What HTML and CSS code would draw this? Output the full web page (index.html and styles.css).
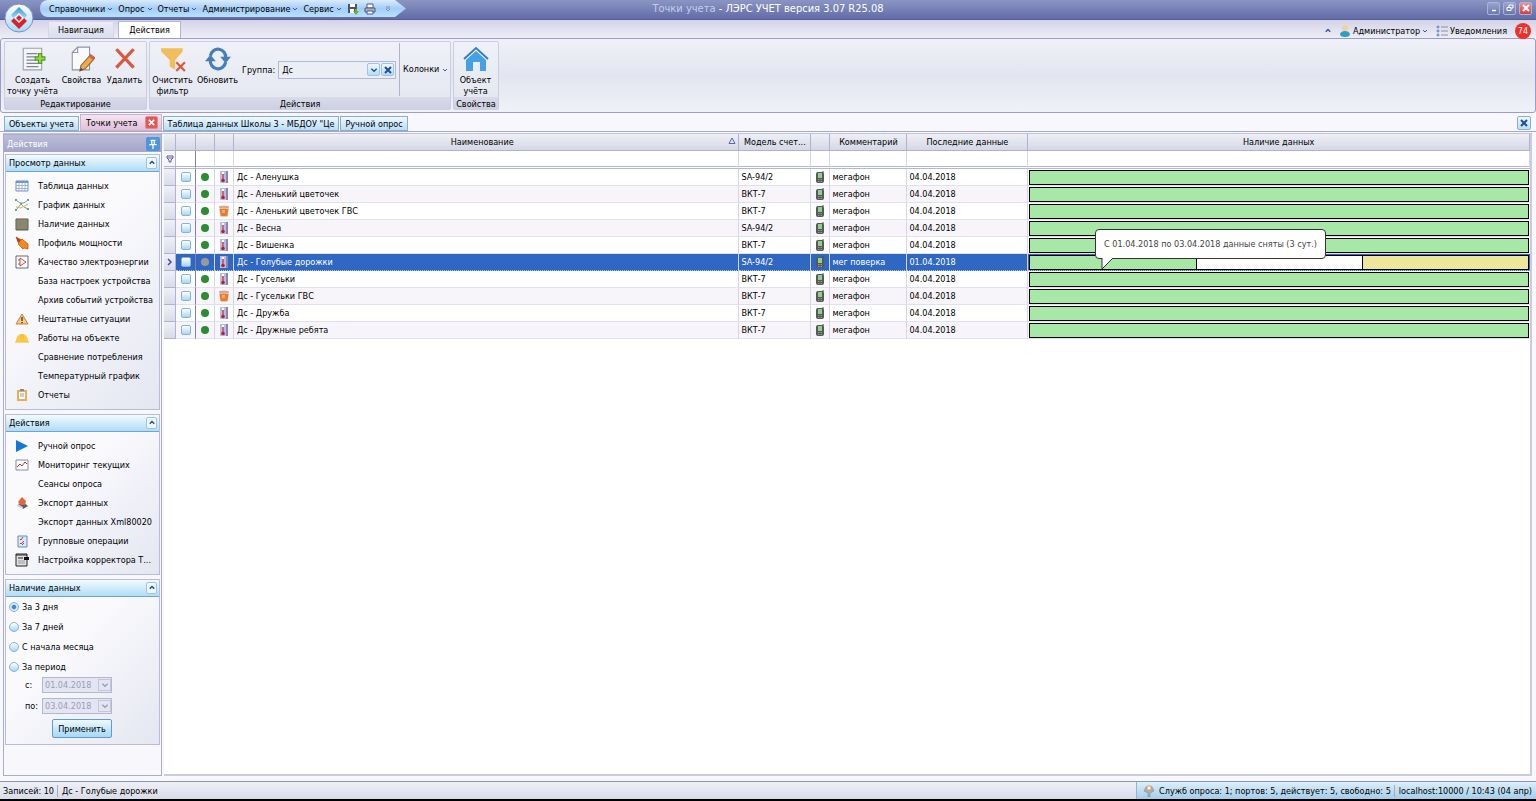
FILE: index.html
```html
<!DOCTYPE html>
<html lang="ru">
<head>
    <meta charset="UTF-8">
    <meta name="viewport" content="width=device-width, initial-scale=1.0">
    <title>Точки учета - ЛЭРС УЧЕТ версия 3.07 R25.08</title>
    <link rel="stylesheet" href="styles.css">
</head>
<body>
    <!-- Shared icons -->
    <svg class="sprite" aria-hidden="true">
        <symbol id="down" viewBox="0 0 6 6"><path d="M1 2l2 2 2-2" fill="none" stroke="currentColor"/></symbol>
        <symbol id="up" viewBox="0 0 8 8"><path d="M1 5l3-3 3 3" fill="none" stroke="currentColor" stroke-width="2"/></symbol>
        <symbol id="cross" viewBox="0 0 8 8"><path d="M1 1l6 6M7 1L1 7" fill="none" stroke="currentColor" stroke-width="2"/></symbol>
        <symbol id="thermo" viewBox="0 0 12 12">
            <rect x="2" width="8" height="12" fill="#b9bce2"/><path d="M8 0h2v12H8z" fill="#8388b8"/>
            <path d="M5 1v8" stroke="#fff" stroke-width="2"/><path d="M5 3v6" stroke="#b5222e" stroke-width="1.4"/><circle cx="5" cy="9.5" r="1.8" fill="#b5222e"/>
        </symbol>
        <symbol id="cup" viewBox="0 0 12 12">
            <path d="M1 1l1.500 11h7L11 1z" fill="#dcd2cc"/><path d="M1.500 4l1.200 7h6.600l1.200-7z" fill="#f07a28"/><path d="M4 5h3v3H4z" fill="#ffb070"/><ellipse cx="6" cy="2" rx="5" ry="1.500" fill="#d8a890"/>
        </symbol>
        <symbol id="phone" viewBox="0 0 12 12">
            <rect x="2" y="1" width="8" height="11" rx="2" fill="#555a55"/><path d="M9 0v2" stroke="#4a4d4a"/><rect x="4" y="2" width="4" height="5" fill="#8ed08a"/><path d="M4 8.500h4M4 10.500h4" stroke="#999" stroke-dasharray="1 .5"/>
        </symbol>
    </svg>

    <header>
        <div class="titlebar">
            <nav class="quick">
                <button>Справочники <svg class="arr"><use href="#down"/></svg></button>
                <button>Опрос <svg class="arr"><use href="#down"/></svg></button>
                <button>Отчеты <svg class="arr"><use href="#down"/></svg></button>
                <button>Администрирование <svg class="arr"><use href="#down"/></svg></button>
                <button>Сервис <svg class="arr"><use href="#down"/></svg></button>
                <button aria-label="Сохранить"><svg class="ico" viewBox="0 0 12 12"><path d="M1 1h9v9H1z" fill="#4a5568"/><path d="M3 1h5v3H3zM3 6h4v4H3z" fill="#fff"/><path d="M8 6h2v2h2L9 12 6 8h2z" fill="#5fb336"/></svg></button>
                <button aria-label="Печать"><svg class="ico" viewBox="0 0 12 12"><path d="M3 1h6v4H3z" fill="#fff" stroke="#4a5a80"/><path d="M1 5h10v4H1z" fill="#a8b4cc" stroke="#4a5a80"/><path d="M3 8h6v3H3z" fill="#fff" stroke="#4a5a80"/></svg></button>
                <button class="more" aria-label="Настройка панели"><svg class="arr" viewBox="0 0 6 6"><path d="M1 1h4M1 3h4L3 5z" fill="#fff" stroke="#5577aa" stroke-width=".7"/></svg></button>
            </nav>
            <h1><span>Точки учета</span> - ЛЭРС УЧЕТ версия 3.07 R25.08</h1>
            <div class="window-buttons">
                <button aria-label="Свернуть"><svg viewBox="0 0 8 8"><path d="M2 6.500h4" stroke="#fff" stroke-width="1.500"/></svg></button>
                <button aria-label="Развернуть"><svg viewBox="0 0 8 8" fill="none" stroke="#fff"><path d="M3 3V1h4v3H5M1 3.500h4v3H1z"/></svg></button>
                <button class="close" aria-label="Закрыть"><svg><use href="#cross"/></svg></button>
            </div>
        </div>
        <button class="app-logo" aria-label="Меню программы">
            <svg viewBox="0 0 30 30">
                <defs>
                    <linearGradient id="orb" x2="0" y2="1"><stop stop-color="#fff"/><stop offset=".5" stop-color="#d4ecfa"/><stop offset="1" stop-color="#a4daf8"/></linearGradient>
                    <linearGradient id="roof" x2="0" y2="1"><stop stop-color="#2b9be0"/><stop offset="1" stop-color="#b4d8ec"/></linearGradient>
                </defs>
                <circle cx="15" cy="15" r="14" fill="url(#orb)" stroke="#7d8fc0"/>
                <path d="M15 4l8 8-3 4-5-5-5 5-3-4z" fill="url(#roof)"/>
                <path d="M7 18l3-3 5 4 5-4 3 3-8 8z" fill="#dc2028"/><path d="M15 10l5 5-5 5-5-5z" fill="#fff"/><path d="M15 12l3 3-3 3-3-3z" fill="#dc2530"/>
            </svg>
        </button>
        <div class="ribbon-tabs">
            <button>Навигация</button>
            <button class="active">Действия</button>
            <div class="user-area">
                <button class="blue" aria-label="Свернуть ленту"><svg class="arr"><use href="#up"/></svg></button>
                <button><svg class="ico" viewBox="0 0 12 12"><circle cx="6" cy="3" r="3" fill="#f5cf9c"/><path d="M1 9q1-3 5-3t5 3q0 3-5 3T1 9z" fill="#2aa0c8"/></svg> Администратор <svg class="arr"><use href="#down"/></svg></button>
                <button><svg class="ico" viewBox="0 0 12 12" fill="none" stroke="#4a80c0"><circle cx="2" cy="2" r="1"/><circle cx="2" cy="6" r="1"/><circle cx="2" cy="10" r="1"/><path d="M5 2h7M5 6h7M5 10h7" stroke="#8a90a0"/></svg> Уведомления</button>
                <span class="badge">74</span>
            </div>
        </div>
        <div class="ribbon">
            <section class="ribbon-group edit-group">
                <div class="tools">
                    <button><svg viewBox="0 0 24 24"><path d="M3 2h17v20H3z" fill="#f4f5f7" stroke="#9aa1ae"/><path d="M6 7h10M6 10h9M6 13h9M6 16h11M6 19h11" stroke="#7d8695" stroke-width="1.300"/><path d="M17 7h3v3h3v3h-3v3h-3v-3h-3v-3h3z" fill="#9bd63c" stroke="#4f9a2a"/></svg>Создать<br>точку учёта</button>
                    <button><svg viewBox="0 0 24 24"><path d="M8 1h11v21H3V6z" fill="#fafafc" stroke="#8e94a4"/><path d="M8 1v5H3" fill="none" stroke="#8e94a4"/><path d="M20 8l4 3-9 10-5 2 1-5z" fill="#f0a848" stroke="#8c6a3c"/><path d="M20 8l4 3-2 2-4-3z" fill="#de5f4c"/><path d="M10 23l1-3 2 2z" fill="#444"/></svg>Свойства</button>
                    <button><svg viewBox="0 0 24 24"><path d="M4 3l16 17M20 3L4 20" stroke="#d9593c" stroke-width="3"/></svg>Удалить</button>
                </div>
                <h2>Редактирование</h2>
            </section>
            <section class="ribbon-group action-group">
                <div class="tools">
                    <button><svg viewBox="0 0 24 24"><path d="M1 2h20v3l-7 8v9l-5-3v-6L1 5z" fill="#f0be5c"/><path d="M15 15l8 8M23 15l-8 8" stroke="#d9593c" stroke-width="2"/></svg>Очистить<br>фильтр</button>
                    <button><svg viewBox="0 0 24 24" fill="none" stroke="#457fba" stroke-width="3"><path d="M5 9a7 7 0 0 1 14 2M19 15a7 7 0 0 1-14-2"/><path d="M14 10h10l-5 6zM0 14l5-6 5 6z" fill="#457fba" stroke="none"/></svg>Обновить</button>
                    <label for="group">Группа:</label>
                    <div class="combo">
                        <input id="group" type="text" value="Дс">
                        <button aria-label="Выбрать"><svg><use href="#down"/></svg></button>
                        <button aria-label="Сбросить"><svg><use href="#cross"/></svg></button>
                    </div>
                    <button class="columns">Колонки <svg class="arr"><use href="#down"/></svg></button>
                </div>
                <h2>Действия</h2>
            </section>
            <section class="ribbon-group object-group">
                <div class="tools">
                    <button><svg viewBox="0 0 26 26"><path d="M1 13L13 2l12 11" fill="none" stroke="#2f7fc4" stroke-width="2"/><path d="M3 14L13 5l10 9v11h-6v-9h-7v9H3z" fill="#46a0e6"/></svg>Объект<br>учёта</button>
                </div>
                <h2>Свойства</h2>
            </section>
        </div>
    </header>

    <nav class="doc-tabs">
        <button>Объекты учета</button>
        <button class="active">Точки учета <span class="tab-close"><svg><use href="#cross"/></svg></span></button>
        <button>Таблица данных Школы 3 - МБДОУ "Це</button>
        <button>Ручной опрос</button>
        <button class="small-button close-doc" aria-label="Закрыть вкладку"><svg><use href="#cross"/></svg></button>
    </nav>

    <main>
        <aside>
            <h2 class="panel-title">Действия <button class="pin" aria-label="Закрепить"><svg viewBox="0 0 8 8"><path d="M2 1h4M3 1v3M5 1v3M1 4.500h6M4 5v3" stroke="#fff"/></svg></button></h2>
            <section class="panel-group">
                <h3>Просмотр данных <button class="small-button" aria-label="Свернуть"><svg><use href="#up"/></svg></button></h3>
                <ul>
                    <li><a href="#"><svg viewBox="0 0 14 14"><path d="M1 2h12v10H1z" fill="#fff" stroke="#6c8fc4"/><path d="M1 3h12" stroke="#6c8fc4" stroke-width="2"/><path d="M1 6.500h12M1 9.500h12M4 2v10M7 2v10M10 2v10" stroke="#8aa8d4" stroke-width=".8"/></svg>Таблица данных</a></li>
                    <li><a href="#"><svg viewBox="0 0 14 14" fill="none"><path d="M1 2l4 3 4 0 4-3" stroke="#6a9ac8"/><path d="M1 12l5-6 3 3 4 2" stroke="#6fa860"/><path d="M1 9l5 1 7-4" stroke="#d8b060"/><path d="M0 1h2v2H0zM12 1h2v2h-2zM0 11h2v2H0zM12 10h2v2h-2zM5 5h2v2H5z" fill="#7a9a90"/></svg>График данных</a></li>
                    <li><a href="#"><svg viewBox="0 0 14 14"><path d="M1 2h12v11H1z" fill="#7cae74" stroke="#555"/><path d="M2 4h10M2 10h10" stroke="#c86068" stroke-width="1.500"/><path d="M2 6h10M2 8h10M2 12h10" stroke="#555" stroke-width=".6"/></svg>Наличие данных</a></li>
                    <li><a href="#"><svg viewBox="0 0 14 14"><path d="M1 1l5 3 1-1 6 5v5l-4-1-1 1-5-5 1-1z" fill="#f28a1e" stroke="#c05a20" stroke-width=".8"/><path d="M1 1l5 3-3 3z" fill="#b83820"/></svg>Профиль мощности</a></li>
                    <li><a href="#"><svg viewBox="0 0 14 14" fill="none"><path d="M1 1h12v12H1z" fill="#fff" stroke="#667"/><path d="M5 3v8l6-4zM3 5h2M3 9h2" stroke="#c04848"/></svg>Качество электроэнергии</a></li>
                    <li><a href="#"><svg></svg>База настроек устройства</a></li>
                    <li><a href="#"><svg></svg>Архив событий устройства</a></li>
                    <li><a href="#"><svg viewBox="0 0 14 14"><path d="M7 2l6 10H1z" fill="#f8c880" stroke="#c08440"/><path d="M7 5v4M7 10v1.200" stroke="#333" stroke-width="1.300"/></svg>Нештатные ситуации</a></li>
                    <li><a href="#"><svg viewBox="0 0 14 14"><path d="M1 11q0-8 6-8t6 8z" fill="#fbcb48"/><path d="M0 11h14M6 3v5M8 3v5" stroke="#f2b632"/></svg>Работы на объекте</a></li>
                    <li><a href="#"><svg></svg>Сравнение потребления</a></li>
                    <li><a href="#"><svg></svg>Температурный график</a></li>
                    <li><a href="#"><svg viewBox="0 0 14 14"><path d="M2 2h10v11H2z" fill="#e8b050"/><path d="M4 4h6v7H4z" fill="#fff"/><path d="M5 1h4v2H5z" fill="#889"/><path d="M5 6h4M5 8h4" stroke="#99a"/></svg>Отчеты</a></li>
                </ul>
            </section>
            <section class="panel-group">
                <h3>Действия <button class="small-button" aria-label="Свернуть"><svg><use href="#up"/></svg></button></h3>
                <ul>
                    <li><a href="#"><svg viewBox="0 0 14 14"><path d="M1 1l12 6-12 6z" fill="#1478d4"/></svg>Ручной опрос</a></li>
                    <li><a href="#"><svg viewBox="0 0 14 14" fill="none"><path d="M1 2h12v10H1z" fill="#fff" stroke="#889"/><path d="M2 9l3-3 2 2 3-4 2 2" stroke="#c83038"/></svg>Мониторинг текущих</a></li>
                    <li><a href="#"><svg></svg>Сеансы опроса</a></li>
                    <li><a href="#"><svg viewBox="0 0 14 14"><path d="M3 8l5-2 5 4-5 3z" fill="#555c66"/><path d="M3 8l5 3v2L2 10z" fill="#ccd"/><path d="M7 1l4 4-1 4H6L3 6z" fill="#e8643c"/></svg>Экспорт данных</a></li>
                    <li><a href="#"><svg></svg>Экспорт данных Xml80020</a></li>
                    <li><a href="#"><svg viewBox="0 0 14 14" fill="none"><path d="M3 2h9v11H3z" fill="#d8e8f8" stroke="#6090c0"/><path d="M5 5l1 1 2-3M5 9l1 1 3-3M7 11l2-2" stroke="#c04040"/></svg>Групповые операции</a></li>
                    <li><a href="#"><svg viewBox="0 0 14 14"><path d="M1 1h11v12H1z" fill="#e0e4e0" stroke="#222"/><path d="M1 2h11M3 5h5" stroke="#222"/><path d="M9 4h5v3H9z" fill="#111"/><path d="M3 8h7M3 10h7" stroke="#99a"/></svg>Настройка корректора Т...</a></li>
                </ul>
            </section>
            <section class="panel-group">
                <h3>Наличие данных <button class="small-button" aria-label="Свернуть"><svg><use href="#up"/></svg></button></h3>
                <form class="period">
                    <label><input type="radio" name="period" checked> За 3 дня</label>
                    <label><input type="radio" name="period"> За 7 дней</label>
                    <label><input type="radio" name="period"> С начала месяца</label>
                    <label><input type="radio" name="period"> За период</label>
                    <div class="date-row">
                        <label for="from">с:</label>
                        <div class="date"><input id="from" type="text" value="01.04.2018" disabled><button disabled aria-label="Календарь"><svg><use href="#down"/></svg></button></div>
                    </div>
                    <div class="date-row">
                        <label for="to">по:</label>
                        <div class="date"><input id="to" type="text" value="03.04.2018" disabled><button disabled aria-label="Календарь"><svg><use href="#down"/></svg></button></div>
                    </div>
                    <button type="button" class="apply">Применить</button>
                </form>
            </section>
        </aside>

        <div class="grid">
            <table>
                <colgroup>
                    <col class="c-mark"><col class="c-check"><col class="c-icon"><col class="c-icon"><col class="c-name">
                    <col class="c-model"><col class="c-icon"><col class="c-comment"><col class="c-date"><col>
                </colgroup>
                <thead>
                    <tr>
                        <th></th><th></th><th></th><th></th>
                        <th class="sorted">Наименование <svg viewBox="0 0 8 8"><path d="M1 6.500L4 1l3 5.500z" fill="none" stroke="#5a68a8"/></svg></th>
                        <th>Модель счет...</th><th></th><th>Комментарий</th><th>Последние данные</th><th>Наличие данных</th>
                    </tr>
                    <tr class="filter">
                        <td><svg viewBox="0 0 8 8"><path d="M1 1h6v2L5 5v2H3V5L1 3zM1 3h6" fill="none" stroke="#5a60a8"/></svg></td>
                        <td></td><td></td><td></td><td></td><td></td><td></td><td></td><td></td><td></td>
                    </tr>
                </thead>
                <tbody>
                    <tr>
                        <td></td><td><input type="checkbox" aria-label="Выбрать"></td><td><i class="dot"></i></td><td><svg><use href="#thermo"/></svg></td>
                        <td>Дс - Аленушка</td><td>SA-94/2</td><td><svg><use href="#phone"/></svg></td><td>мегафон</td><td>04.04.2018</td><td><div class="bar"><i></i></div></td>
                    </tr>
                    <tr>
                        <td></td><td><input type="checkbox" aria-label="Выбрать"></td><td><i class="dot"></i></td><td><svg><use href="#thermo"/></svg></td>
                        <td>Дс - Аленький цветочек</td><td>ВКТ-7</td><td><svg><use href="#phone"/></svg></td><td>мегафон</td><td>04.04.2018</td><td><div class="bar"><i></i></div></td>
                    </tr>
                    <tr>
                        <td></td><td><input type="checkbox" aria-label="Выбрать"></td><td><i class="dot"></i></td><td><svg><use href="#cup"/></svg></td>
                        <td>Дс - Аленький цветочек ГВС</td><td>ВКТ-7</td><td><svg><use href="#phone"/></svg></td><td>мегафон</td><td>04.04.2018</td><td><div class="bar"><i></i></div></td>
                    </tr>
                    <tr>
                        <td></td><td><input type="checkbox" aria-label="Выбрать"></td><td><i class="dot"></i></td><td><svg><use href="#thermo"/></svg></td>
                        <td>Дс - Весна</td><td>SA-94/2</td><td><svg><use href="#phone"/></svg></td><td>мегафон</td><td>04.04.2018</td><td><div class="bar"><i></i></div></td>
                    </tr>
                    <tr>
                        <td></td><td><input type="checkbox" aria-label="Выбрать"></td><td><i class="dot"></i></td><td><svg><use href="#thermo"/></svg></td>
                        <td>Дс - Вишенка</td><td>ВКТ-7</td><td><svg><use href="#phone"/></svg></td><td>мегафон</td><td>04.04.2018</td><td><div class="bar"><i></i></div></td>
                    </tr>
                    <tr class="selected">
                        <td><svg viewBox="0 0 8 8"><path d="M2 1l3 3-3 3" fill="none" stroke="#4a4ab0" stroke-width="1.500"/></svg></td><td><input type="checkbox" aria-label="Выбрать"></td><td><i class="dot off"></i></td><td><svg><use href="#thermo"/></svg></td>
                        <td>Дс - Голубые дорожки</td><td>SA-94/2</td><td><svg><use href="#phone"/></svg></td><td>мег поверка</td><td>01.04.2018</td>
                        <td><div class="bar"><i></i><i class="empty"></i><i class="partial"></i>
                            <div class="tip">С 01.04.2018 по 03.04.2018 данные сняты (3 сут.)<svg viewBox="0 0 14 12"><path d="M1 0v11L12 0" fill="#fff" stroke="#333"/></svg></div></div></td>
                    </tr>
                    <tr>
                        <td></td><td><input type="checkbox" aria-label="Выбрать"></td><td><i class="dot"></i></td><td><svg><use href="#thermo"/></svg></td>
                        <td>Дс - Гусельки</td><td>ВКТ-7</td><td><svg><use href="#phone"/></svg></td><td>мегафон</td><td>04.04.2018</td><td><div class="bar"><i></i></div></td>
                    </tr>
                    <tr>
                        <td></td><td><input type="checkbox" aria-label="Выбрать"></td><td><i class="dot"></i></td><td><svg><use href="#cup"/></svg></td>
                        <td>Дс - Гусельки ГВС</td><td>ВКТ-7</td><td><svg><use href="#phone"/></svg></td><td>мегафон</td><td>04.04.2018</td><td><div class="bar"><i></i></div></td>
                    </tr>
                    <tr>
                        <td></td><td><input type="checkbox" aria-label="Выбрать"></td><td><i class="dot"></i></td><td><svg><use href="#thermo"/></svg></td>
                        <td>Дс - Дружба</td><td>ВКТ-7</td><td><svg><use href="#phone"/></svg></td><td>мегафон</td><td>04.04.2018</td><td><div class="bar"><i></i></div></td>
                    </tr>
                    <tr>
                        <td></td><td><input type="checkbox" aria-label="Выбрать"></td><td><i class="dot"></i></td><td><svg><use href="#thermo"/></svg></td>
                        <td>Дс - Дружные ребята</td><td>ВКТ-7</td><td><svg><use href="#phone"/></svg></td><td>мегафон</td><td>04.04.2018</td><td><div class="bar"><i></i></div></td>
                    </tr>
                </tbody>
            </table>
        </div>
    </main>

    <footer>
        <span class="count">Записей: 10</span>
        <span>Дс - Голубые дорожки</span>
        <div class="server">
            <svg viewBox="0 0 12 12"><path d="M3 2h6l2 4-4 2v4H5V8L1 6z" fill="#a8adb8" stroke="#858b98" stroke-width=".6"/><path d="M4 1h4v4H4z" fill="#fff" stroke="#e09a50"/></svg>
            <span class="polls">Служб опроса: 1; портов: 5, действует: 5, свободно: 5</span>
            <span>localhost:10000 / 10:43 (04 апр)</span>
        </div>
    </footer>
</body>
</html>
```
FILE: styles.css
```css
* {
    box-sizing: border-box;
}
body {
    margin: 0;
    height: 100vh;
    display: flex;
    flex-direction: column;
    overflow: hidden;
    background: #f8f8fc;
    border-bottom: 2px solid #000;
    font-family: "DejaVu Sans Condensed", "DejaVu Sans", sans-serif;
    font-size: 9px;
    line-height: 12px;
    color: #000;
}
button, input {
    font: inherit;
    color: inherit;
    margin: 0;
    padding: 0;
    border: 0;
    background: none;
}
button {
    white-space: nowrap;
}
h1, h2, h3, ul {
    margin: 0;
    padding: 0;
    font-size: 9px;
    font-weight: normal;
}
svg {
    flex: none;
}
.sprite {
    position: absolute;
    width: 0;
    height: 0;
}
.arr {
    width: 6px;
    height: 6px;
    color: #3c5a90;
}
.ico {
    width: 12px;
    height: 12px;
}

/* title bar */
header {
    position: relative;
}
.titlebar {
    height: 20px;
    display: grid;
    grid-template-columns: 1fr auto 1fr;
    align-items: center;
    background: linear-gradient(#8b95c4, #626ca6);
    border-bottom: 1px solid #555e9c;
}
.quick {
    display: flex;
    align-items: center;
    align-self: start;
    gap: 5px;
    width: 366px;
    height: 17px;
    margin-left: 40px;
    padding-left: 9px;
    background: linear-gradient(#d8ebfc, #a5cdf5 50%, #b8e0ff);
    border-radius: 8px 0 0 8px;
    clip-path: polygon(0 0, 97% 0, 100% 50%, 97% 100%, 0 100%);
}
.quick button, .user-area button {
    display: flex;
    align-items: center;
    gap: 2px;
}
.quick .more {
    margin-left: auto;
    padding-right: 15px;
}
h1 {
    font-size: 11px;
    line-height: 16px;
    padding-bottom: 2px;
    color: #fff;
}
h1 span {
    color: #c5cdee;
}
.window-buttons {
    display: flex;
    justify-content: flex-end;
    gap: 3px;
    padding: 0 4px 3px 0;
}
.window-buttons button {
    display: flex;
    align-items: center;
    justify-content: center;
    width: 13px;
    height: 13px;
    border: 1px solid #a9b3d8;
    border-radius: 2px;
    background: linear-gradient(#9aa4d0, #6c77b0);
    color: #fff;
}
.window-buttons svg {
    width: 8px;
    height: 8px;
}
.window-buttons .close {
    background: linear-gradient(#f09090, #dc3838);
}
.app-logo {
    position: absolute;
    left: 4px;
    top: 3px;
    width: 30px;
    height: 30px;
}
.app-logo svg {
    display: block;
}

/* ribbon */
.ribbon-tabs {
    display: flex;
    align-items: flex-end;
    gap: 4px;
    height: 18px;
    padding-left: 48px;
    background: linear-gradient(#d2d3e6, #eeeef7);
}
.ribbon-tabs > button {
    width: 66px;
    height: 17px;
    border: 1px solid #d5d6e8;
    border-bottom: 0;
    background: linear-gradient(#eaebf5, #dcdeec);
}
.ribbon-tabs > .active {
    width: 63px;
    border-color: #b4b6d6;
    background: #fff;
}
.user-area {
    display: flex;
    align-items: center;
    align-self: stretch;
    gap: 8px;
    margin-left: auto;
    padding: 3px 5px 0 0;
}
.blue {
    color: #2a5298;
}
.badge {
    width: 16px;
    height: 16px;
    border-radius: 50%;
    background: #f03028;
    color: #fff;
    line-height: 16px;
    text-align: center;
}
.ribbon {
    display: flex;
    gap: 2px;
    height: 75px;
    padding: 2px 3px;
    border: 1px solid #9b9cc8;
    border-radius: 3px;
    background: linear-gradient(#f0f1f8, #e2e5f0 50%, #f0f1f8);
}
.ribbon-group {
    display: flex;
    flex-direction: column;
    border: 1px solid #cccde2;
    border-radius: 2px;
    background: linear-gradient(#f0f1f7, #e3e6f1);
}
.ribbon-group h2 {
    height: 13px;
    line-height: 14px;
    text-align: center;
    background: linear-gradient(#d9dbea, #cdcfe2);
}
.edit-group {
    width: 143px;
}
.action-group {
    width: 302px;
}
.object-group {
    width: 46px;
}
.tools {
    flex: 1;
    display: flex;
    align-items: center;
}
.tools > button {
    flex: none;
    align-self: flex-start;
    width: 43px;
    padding-top: 4px;
    line-height: 11px;
    text-align: center;
}
.tools > button > svg {
    display: block;
    width: 26px;
    height: 26px;
    margin: 0 auto 3px;
}
.edit-group .tools > button:first-child {
    width: 55px;
}
.action-group .tools > button {
    width: 45px;
}
.action-group .tools label {
    margin-left: 2px;
}
.combo {
    flex: 1;
    min-width: 0;
    display: flex;
    align-items: center;
    gap: 1px;
    height: 18px;
    margin: 0 3px;
    padding-right: 1px;
    border: 1px solid #b4b8d6;
    background: #eceef6;
}
.combo input {
    flex: 1;
    min-width: 0;
    padding-left: 3px;
}
.combo button, .small-button {
    display: flex;
    align-items: center;
    justify-content: center;
    width: 13px;
    height: 13px;
    border: 1px solid #9cc4e4;
    border-radius: 2px;
    background: linear-gradient(#f0f8ff, #b4dcf8);
    color: #1f4f90;
}
.combo svg, .small-button svg {
    width: 8px;
    height: 8px;
}
.action-group .tools > .columns {
    display: flex;
    align-items: center;
    align-self: stretch;
    gap: 3px;
    width: 51px;
    margin: 1px 0;
    padding: 0 0 0 3px;
    border-left: 1px solid #b0b2cc;
}
.tools > .columns > svg {
    width: 6px;
    height: 6px;
    margin: 0;
}

/* document tabs */
.doc-tabs {
    display: flex;
    align-items: flex-end;
    gap: 1px;
    height: 19px;
    padding: 0 5px 0 4px;
    border-bottom: 1px solid #a5a7cc;
}
.doc-tabs button {
    height: 15px;
    padding: 0 4px;
    border: 1px solid #8faccf;
    background: linear-gradient(#eef8ff, #b9def6);
}
.doc-tabs .active {
    display: flex;
    align-items: center;
    gap: 7px;
    height: 17px;
    padding: 0 3px 0 5px;
    border-color: #d0b0cc;
    background: linear-gradient(#f4e4f0, #dfc0da);
}
.tab-close {
    display: flex;
    padding: 2px;
    border: 1px solid #e88;
    border-radius: 2px;
    background: #e05a54;
    color: #fff;
}
.tab-close svg {
    width: 7px;
    height: 7px;
}
.doc-tabs .close-doc {
    width: 14px;
    height: 14px;
    margin: 0 0 1px auto;
    padding: 0;
}

/* workspace */
main {
    flex: 1;
    min-height: 0;
    display: flex;
    gap: 2px;
    margin: 1px 4px 5px 3px;
    border-top: 1px solid #c2c4de;
}
aside {
    width: 159px;
    border: 1px solid #a9abcf;
    padding: 0 1px;
}
.panel-title {
    display: flex;
    justify-content: space-between;
    align-items: center;
    height: 17px;
    margin: 0 -1px 2px;
    padding: 0 1px 0 3px;
    background: linear-gradient(#bcbdd9, #a3a5c9);
    color: #fff;
}
.pin {
    width: 14px;
    height: 14px;
    border-radius: 2px;
    background: #4e96dc;
}
.pin svg {
    display: block;
    width: 10px;
    height: 10px;
    margin: auto;
}
.panel-group {
    margin-bottom: 4px;
    border: 1px solid #b9bbda;
    background: linear-gradient(135deg, #fafafd 40%, #e4e6f1);
}
.panel-group h3 {
    display: flex;
    justify-content: space-between;
    align-items: center;
    height: 17px;
    padding: 0 2px 0 3px;
    background: linear-gradient(#f2fbff, #b0dcf6);
    border-bottom: 1px solid #6fa6d0;
}
.panel-group h3 .small-button {
    width: 11px;
    height: 12px;
    background: #f0f8ff;
}
.panel-group h3 .small-button svg {
    width: 6px;
    height: 6px;
}
.panel-group ul {
    list-style: none;
    padding: 4px 0 5px;
}
.panel-group a {
    display: flex;
    align-items: center;
    gap: 9px;
    height: 19px;
    padding-left: 9px;
    color: inherit;
    text-decoration: none;
    white-space: nowrap;
}
.panel-group a svg {
    width: 14px;
    height: 14px;
}
.period {
    padding-bottom: 6px;
}
.period > label {
    display: flex;
    align-items: center;
    gap: 3px;
    height: 20px;
    padding-left: 3px;
}
input[type="radio"], input[type="checkbox"] {
    appearance: none;
    width: 10px;
    height: 10px;
    border: 1px solid #84b4dc;
    border-radius: 50%;
    background: linear-gradient(#fff, #a8d6f4);
}
input[type="radio"]:checked {
    background: radial-gradient(#4a88cc 30%, #d4ebfb 50%);
}
.date-row {
    display: flex;
    align-items: center;
    margin-bottom: 5px;
    padding-left: 19px;
}
.date-row label {
    width: 17px;
}
.date {
    display: flex;
    align-items: center;
    width: 70px;
    height: 16px;
    border: 1px solid #b4b6d2;
    background: #e3e5f0;
    color: #9a9cbc;
}
.date input {
    flex: 1;
    min-width: 0;
    padding-left: 2px;
}
.date button {
    width: 13px;
    height: 12px;
    border: 1px solid #c4c6dc;
}
.date svg {
    display: block;
    width: 8px;
    height: 8px;
    margin: auto;
}
.apply {
    display: block;
    width: 60px;
    height: 19px;
    margin-left: 46px;
    border: 1px solid #5f9cc8;
    border-radius: 2px;
    background: linear-gradient(#f0faff, #c8e8fa 50%, #a6d8f6);
}

/* table */
.grid {
    flex: 1;
    min-width: 0;
    border: solid #c9cbe3;
    border-width: 0 2px 2px 0;
    background: #fff;
}
table {
    width: 100%;
    table-layout: fixed;
    border-collapse: separate;
    border-spacing: 0;
    white-space: nowrap;
}
.c-mark { width: 12px; }
.c-check { width: 20px; }
.c-icon { width: 19px; }
.c-name { width: 37%; }
.c-model { width: 72px; }
.c-comment { width: 77px; }
.c-date { width: 121px; }
th, td {
    height: 17px;
    padding: 0 2px;
    border-right: 1px solid #d4d6ec;
    border-bottom: 1px solid #dfe0f2;
    text-align: left;
    font-weight: normal;
}
th {
    border-color: #b0b2d0;
    background: linear-gradient(#eeeff6, #d5d7e6);
    text-align: center;
}
.sorted svg {
    float: right;
    width: 8px;
    height: 8px;
    margin-top: 1px;
}
.filter td {
    height: 18px;
    border-bottom: 3px double #b4b6d8;
}
td svg {
    display: block;
    width: 12px;
    height: 12px;
    margin: auto;
}
td:first-child {
    padding: 0;
    background: linear-gradient(#f0f0f7, #d9dbe9);
    border-color: #b0b2d0;
}
td:first-child svg {
    width: 8px;
    height: 8px;
}
.filter td:first-child {
    background: #f4f4fa;
}
td:nth-child(2) {
    border-right-color: #7c80ac;
}
td input[type="checkbox"] {
    display: block;
    margin: auto;
    border-radius: 2px;
}
tbody td:nth-child(5) {
    padding-left: 3px;
}
tbody tr:nth-child(even) td:not(:first-child) {
    background: #f8f5fa;
}
.dot {
    display: block;
    width: 8px;
    height: 8px;
    margin: auto;
    border-radius: 50%;
    background: #2c8c34;
}
.dot.off {
    background: #999;
}
tbody tr.selected td:not(:first-child) {
    background: #2f67c3;
    border-bottom: 1px dotted #a8c4f0;
    color: #fff;
}
tbody td:last-child {
    padding: 0 1px;
    border-right: 0;
}
.bar {
    position: relative;
    display: flex;
    height: 15px;
    border: 1px solid #000;
}
.bar i {
    flex: 1;
    background: #a7e8a7;
}
.bar i + i {
    border-left: 1px solid #000;
}
.bar .empty {
    background: #fff;
}
.bar .partial {
    background: #ede69c;
}
.tip {
    position: absolute;
    left: 13%;
    bottom: 10px;
    padding: 8px;
    border: 1px solid #333;
    border-radius: 4px;
    background: #fff;
    color: #444;
}
.tip svg {
    position: absolute;
    left: 5px;
    top: 100%;
    width: 14px;
    height: 12px;
}

/* status bar */
footer {
    display: flex;
    align-items: center;
    gap: 4px;
    height: 18px;
    padding-left: 3px;
    border-top: 1px solid #8f94b8;
    background: linear-gradient(#eff0f7, #d9dbe9);
    white-space: nowrap;
}
.count, .polls {
    padding-right: 3px;
    border-right: 1px solid #a8abc8;
}
.server {
    display: flex;
    align-items: center;
    align-self: stretch;
    gap: 4px;
    margin-left: auto;
    padding: 0 4px 0 6px;
    border-left: 1px solid #8fb4d8;
    background: linear-gradient(#dceffb, #a5cdea);
}
.server svg {
    width: 12px;
    height: 12px;
}
```
